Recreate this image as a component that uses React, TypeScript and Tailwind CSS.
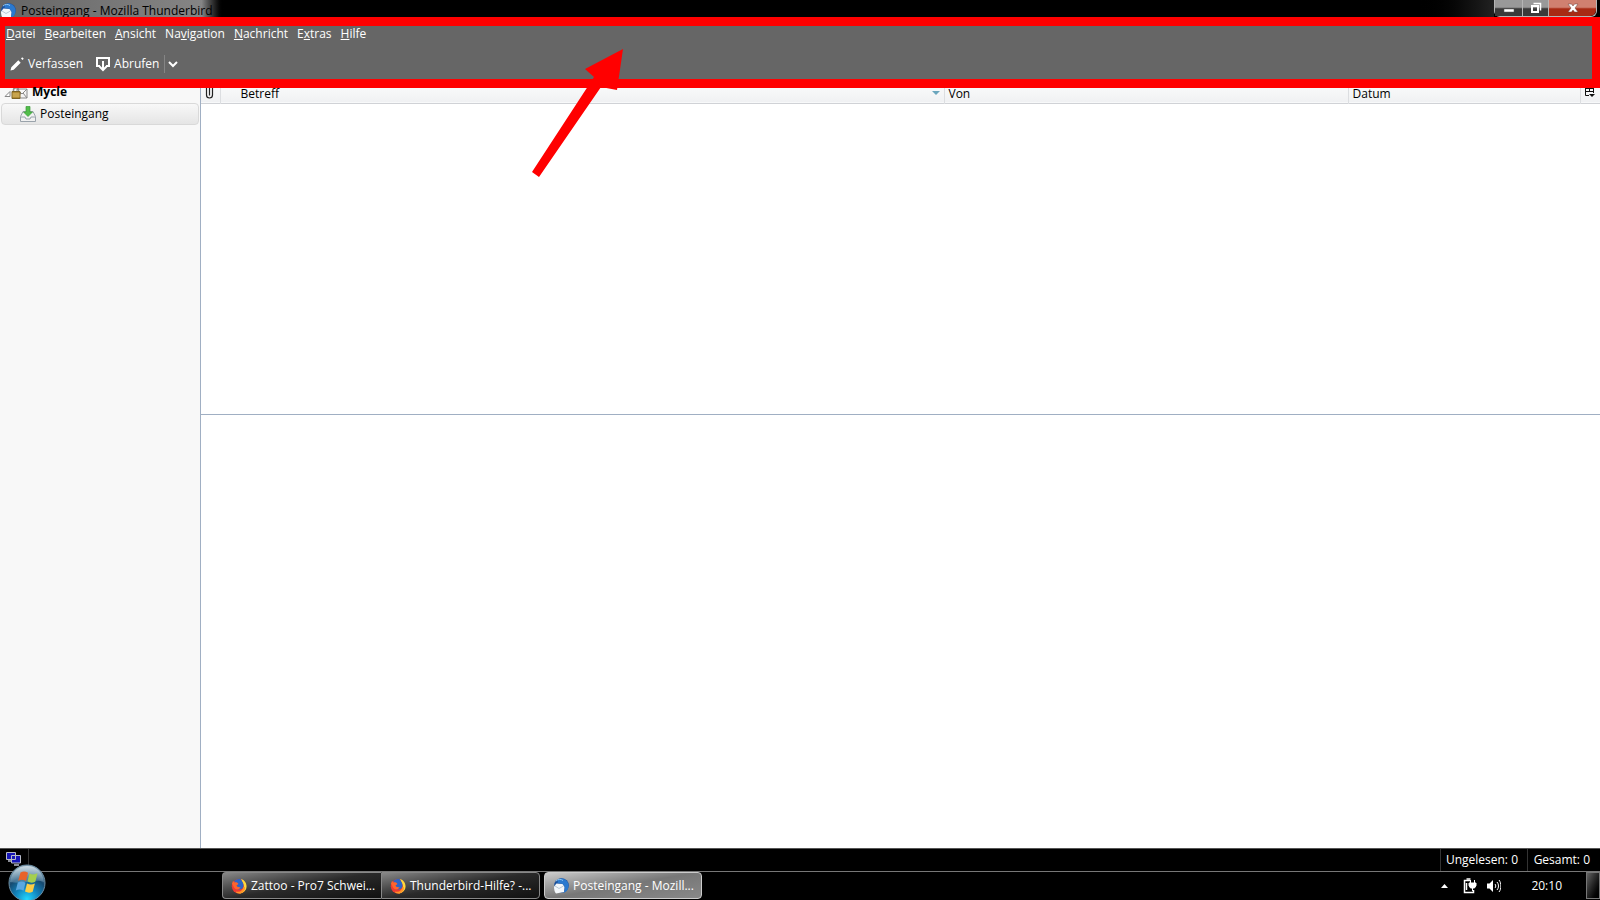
import type { ReactNode } from "react";

const menuItems = [
  { before: "", key: "D", after: "atei" },
  { before: "", key: "B", after: "earbeiten" },
  { before: "", key: "A", after: "nsicht" },
  { before: "Na", key: "v", after: "igation" },
  { before: "", key: "N", after: "achricht" },
  { before: "E", key: "x", after: "tras" },
  { before: "", key: "H", after: "ilfe" },
];

const ThunderbirdIcon = () => (
  <svg className="size-4 shrink-0" viewBox="0 0 16 16" aria-hidden="true">
    <circle cx="8.5" cy="7.5" r="7.3" fill="#1b519c" />
    <path d="M5 1.5C9-1 15 2 15.500 7c.3 4-2 7-5 8 2-3 2-7-1-9-1.500-1-3-1-5-1z" fill="#2a79cf" />
    <path d="M3 3c2-2 5-2 7-.5" stroke="#8fc8f5" strokeWidth="1" fill="none" />
    <path d="M1 8.500 3.500 5.500l6 .5 2 3L11 14l-8 1.500C1.500 14 1 11 1 8.500z" fill="#f3f7fb" />
    <path d="m2 8 4 2.500L10.500 8" stroke="#a9bccd" strokeWidth=".8" fill="none" />
  </svg>
);

const FirefoxIcon = () => (
  <svg className="size-4 shrink-0" viewBox="0 0 16 16" aria-hidden="true">
    <circle cx="8" cy="8.300" r="7.200" fill="#ef3b32" />
    <path d="M10 1c3.500 1 5.800 4 5.500 8-.4 4-4 6.700-8 6.500 4-.5 6-3.500 5.500-7C12.700 5.500 11 4 10 1z" fill="#ffd83b" />
    <path d="M5 13.500c4 1 7-1 7.500-5l1.500 1c0 4-3 6-6 6-2 0-3-1-3-2z" fill="#ff9427" />
    <path d="M3.500 3.500C5 1 8 .5 10 1.500c1 2 2.500 3 2.500 6 0 2.500-2 4-4 4S4.500 10 4.500 8z" fill="#2b65c7" />
    <path d="M1 5.500 2 3l1.500 1.500c2-.5 3 0 4 1.500L5.500 7.500C6 9 7.500 9.500 9.500 9 9 11.500 5 12.500 3 9.500z" fill="#ff642c" />
  </svg>
);

const StartOrb = () => (
  <svg className="size-[38px]" viewBox="0 0 38 38" aria-hidden="true">
    <defs>
      <radialGradient id="orb" cx=".5" cy=".95" r=".95">
        <stop offset="0" stopColor="#22d8ff" />
        <stop offset=".35" stopColor="#1284bd" />
        <stop offset=".65" stopColor="#174a70" />
        <stop offset="1" stopColor="#8da9bb" />
      </radialGradient>
      <linearGradient id="orbShine" x1="0" y1="0" x2="0" y2="1">
        <stop offset="0" stopColor="#d9e4ea" stopOpacity=".85" />
        <stop offset="1" stopColor="#8fb4c9" stopOpacity=".35" />
      </linearGradient>
    </defs>
    <circle cx="19" cy="19" r="18" fill="url(#orb)" stroke="#6d8ea3" />
    <path d="M2 18C3 8 10 2 19 2s16 6 17 16c-10-4-20 3-34 0z" fill="url(#orbShine)" />
    <path d="M12.500 8.500c3-1.500 5-1 7.500.3l-2 8.200c-2.500-1.500-5-1.700-7.800-.3z" fill="#e8632a" />
    <path d="M21.500 9.500c3 1.300 5 1.300 8-.2l-2.200 8.400c-3 1.400-5 1.200-7.800-.1z" fill="#a5cf4e" />
    <path d="M9.800 18.500c2.900-1.400 5.200-1.200 7.700.2l-2 8c-2.500-1.400-5-1.500-7.700-.2z" fill="#5aa7e0" />
    <path d="M19 19.500c2.700 1.300 5 1.400 7.900 0l-2.200 8.200c-2.800 1.400-5 1.200-7.700-.1z" fill="#fccd45" />
  </svg>
);

const WindowButton = ({ label, className, children }: { label: string; className: string; children: ReactNode }) => (
  <button aria-label={label} className={`flex h-full items-center justify-center border-r border-[#b5b5b5] ${className}`}>
    {children}
  </button>
);

const TitleBar = () => (
  <header className="flex h-[17px] shrink-0 overflow-hidden bg-black">
    <div className="flex h-[21px] w-[224px] items-center gap-[5px] bg-linear-to-r from-[#666] via-[#858585] via-90% to-black text-black">
      <ThunderbirdIcon />
      <h1 className="whitespace-nowrap">Posteingang - Mozilla Thunderbird</h1>
    </div>
    <div className="ml-auto w-20 bg-linear-to-r from-black to-[#222]" />
    <div className="mr-[3px] flex h-full rounded-b-md border border-t-0 border-[#b5b5b5]">
      <WindowButton label="Minimieren" className="w-7 bg-linear-to-b from-[#999] from-45% to-[#3a3a3a] to-55%">
        <svg className="h-4 w-3" viewBox="0 0 12 16">
          <path d="M1 9h10v3H1z" fill="#fff" stroke="#555" strokeWidth=".5" />
        </svg>
      </WindowButton>
      <WindowButton label="Wiederherstellen" className="w-[26px] bg-linear-to-b from-[#999] from-45% to-[#3a3a3a] to-55%">
        <svg className="h-4 w-3" viewBox="0 0 12 16" fill="none" stroke="#fff">
          <path d="M3.500 3.500h7v7" strokeWidth="1.500" />
          <path d="M2 6h6v6H2z" strokeWidth="2" />
        </svg>
      </WindowButton>
      <button aria-label="Schließen" className="flex h-full w-[47px] items-center justify-center rounded-br-md bg-linear-to-b from-[#d08070] from-45% to-[#a82a14] to-55%">
        <svg className="h-4 w-3" viewBox="0 0 12 16">
          <path d="M1 4h3.500L6 6l1.500-2H11L8 8l3 4H7.500L6 10l-1.500 2H1l3-4z" fill="#fff" stroke="#6b3e38" strokeWidth=".5" />
        </svg>
      </button>
    </div>
  </header>
);

const Toolbar = () => (
  <div className="h-[71px] shrink-0 border-t-9 border-r-8 border-b-9 border-l-5 border-[#f00] bg-[#666] text-white [text-shadow:1px_1px_1px_#222]">
    <nav className="flex h-4 items-center gap-[9px] pl-px">
      {menuItems.map((item) => (
        <button key={item.key + item.after}>
          {item.before}
          <span className="underline underline-offset-1">{item.key}</span>
          {item.after}
        </button>
      ))}
    </nav>
    <div className="flex h-11 items-center pl-[5px]">
      <button className="flex items-center gap-1">
        <svg className="size-[14px]" viewBox="0 0 14 14" fill="#fff">
          <path d="M.5 13.500 1.300 10.300 8.300 3.300l2.400 2.400-7 7zM11 1.500l1.200-1.300 1.600 1.600L12.500 3z" />
        </svg>
        Verfassen
      </button>
      <button className="ml-[13px] flex items-center gap-1">
        <svg className="h-4 w-[14px]" viewBox="0 0 14 16" fill="none" stroke="#fff" strokeWidth="2">
          <path d="M4 10H1V2h12v8h-3" />
          <path d="M7 5v9M3.500 10.500 7 14l3.500-3.500" />
        </svg>
        Abrufen
      </button>
      <button aria-label="Abrufen-Optionen" className="ml-[5px] flex h-[18px] items-center border-l border-[#858585] pl-[3px]">
        <svg className="size-[10px]" viewBox="0 0 10 10" fill="none" stroke="#fff" strokeWidth="2">
          <path d="m1 3 4 4 4-4" />
        </svg>
      </button>
    </div>
  </div>
);

const FolderPane = () => (
  <aside className="w-[201px] shrink-0 border-r border-[#a0afc3] bg-[#f8f8f8]">
    <div className="flex h-[15px] items-start pl-1">
      <svg className="h-3 w-6" viewBox="0 4 24 12" aria-hidden="true">
        <path d="M1 12.500h5v-5z" fill="#fff" stroke="#888" />
        <path d="M13 5h10v9H13zM13 5l5 5 5-5M13 14l4-5m6 5-4-5" fill="#f4f4f4" stroke="#888" />
        <path d="M9.500 8V6c0-3 5-3 5 0v2" fill="none" stroke="#8f8f8f" strokeWidth="1.500" />
        <path d="M8 7.500h8v7H8z" fill="#b18b35" stroke="#7e6426" />
        <path d="M8.500 10h7M8.500 12h7" stroke="#dfbd68" />
      </svg>
      <span className="ml-1 leading-2 font-bold">Mycle</span>
    </div>
    <a href="#posteingang" className="mx-px flex h-[22px] items-center gap-1 rounded-sm border border-[#d9d9d9] bg-linear-to-b from-[#f8f8f8] to-[#e5e5e5] pl-[18px]">
      <svg className="size-4" viewBox="0 0 16 16" aria-hidden="true">
        <path d="M3 5.500h10l2.500 5v5H.5v-5z" fill="#f1f1f1" stroke="#9aa3ab" />
        <path d="M1 11h4l1 2h4l1-2h4" fill="none" stroke="#9aa3ab" />
        <path d="M6 .5h4V6h2.500L8 10.500 3.500 6H6z" fill="#52bd4a" stroke="#3a9c38" strokeWidth=".7" />
      </svg>
      Posteingang
    </a>
  </aside>
);

const MessageList = () => (
  <section className="h-[327px] shrink-0 border-b border-[#a0afc3]">
    <table className="w-full table-fixed border-collapse text-left">
      <thead>
        <tr className="h-[15px] border-b border-[#d0d2d6] bg-linear-to-b from-[#f8f9fa] to-[#f0f1f3] align-top leading-3">
          <th aria-label="Anhang" className="w-[19px] border-r border-[#dcdee1] p-0">
            <svg className="ml-1 h-3 w-[10px]" viewBox="0 0 10 12" fill="none" stroke="#222">
              <path d="M1.500 0v7c0 4 6 4 6 0V0M4.500 0v7.500" strokeWidth="1.200" />
            </svg>
          </th>
          <th className="border-r border-[#dcdee1] p-0 font-normal">
            <div className="flex justify-between pr-1 pl-5">
              Betreff
              <svg className="mt-[3px] h-1 w-2" viewBox="0 0 8 4">
                <path d="M0 0h8L4 4z" fill="#6ba6bd" />
              </svg>
            </div>
          </th>
          <th className="w-[404px] border-r border-[#dcdee1] p-0 pl-1 font-normal">Von</th>
          <th className="w-[232px] border-r border-[#dcdee1] p-0 pl-1 font-normal">Datum</th>
          <th aria-label="Spalten" className="w-5 p-0">
            <svg className="ml-[3px] h-3 w-3" viewBox="0 0 12 12" fill="none" stroke="#111">
              <path d="M5 7.500H1.500V0M9.500 0v5M1.500 3.500h8M5.500 0v3.500M1 .5h9" />
              <path d="M5 6h6L8 9z" fill="#111" stroke="none" />
            </svg>
          </th>
        </tr>
      </thead>
    </table>
  </section>
);

const StatusBar = () => (
  <footer className="flex h-[23px] shrink-0 items-stretch border-t border-[#555] bg-black text-white">
    <div className="flex w-[29px] items-start border-r border-[#333] pt-[3px] pl-[6px]">
      <svg className="h-[14px] w-4" viewBox="0 0 16 14" aria-hidden="true">
        <path d="M2 9h3M8 13h5" stroke="#b8bcc8" strokeWidth="1.500" />
        <path d="M.5.500h9v7h-9zM5.500 3.500h9v7.500h-9z" fill="#1616b8" stroke="#b8bcc8" />
      </svg>
    </div>
    <span className="ml-auto flex w-[87px] items-center justify-end border-l border-[#333] pr-[9px]">Ungelesen: 0</span>
    <span className="flex w-[73px] items-center justify-end border-l border-[#333] pr-[10px]">Gesamt: 0</span>
  </footer>
);

const Taskbar = () => (
  <div className="flex h-[29px] shrink-0 border-t border-[#777] bg-black pb-px text-white">
    <button aria-label="Start" className="relative ml-2 w-[214px]">
      <span className="absolute -top-2 left-0">
        <StartOrb />
      </span>
    </button>
    <button className="flex w-[159px] items-center gap-1 rounded-l-sm border border-r-0 border-[#888] bg-linear-170 from-[#888] via-[#2a2a2a] via-50% to-[#111] pl-2">
      <FirefoxIcon />
      <span className="whitespace-nowrap">Zattoo - Pro7 Schwei...</span>
    </button>
    <button className="flex w-[159px] items-center gap-1 rounded-r-sm border border-[#888] bg-linear-170 from-[#888] via-[#2a2a2a] via-50% to-[#111] pl-2">
      <FirefoxIcon />
      <span className="whitespace-nowrap">Thunderbird-Hilfe? -...</span>
    </button>
    <button className="ml-1 flex w-[158px] items-center gap-1 rounded-sm border border-[#ccc] bg-linear-170 from-[#ccc] via-[#777] via-50% to-[#888] pl-2">
      <ThunderbirdIcon />
      <span className="whitespace-nowrap">Posteingang - Mozill...</span>
    </button>
    <div className="ml-auto flex items-center">
      <svg className="h-1 w-[7px]" viewBox="0 0 7 4" aria-hidden="true">
        <path d="M0 4h7L3.500 0z" fill="#fff" />
      </svg>
      <svg className="ml-[15px] h-4 w-[14px]" viewBox="0 0 14 16" fill="none" stroke="#fff" aria-hidden="true">
        <path d="M7 2.500H1.500v12h9V12" strokeWidth="1.500" />
        <path d="M3.500 5v7M3.500 1h4" strokeWidth="1.500" />
        <path d="M6 5h7v2.500L11.500 10h-4L6 7.500z" fill="#fff" />
        <path d="M7.500 2v3m4-3v3M9.500 10v3" />
      </svg>
      <svg className="ml-[10px] h-[14px] w-[14px]" viewBox="0 0 14 14" fill="none" stroke="#fff" aria-hidden="true">
        <path d="M0 4.500h2.500L6 1v12L2.500 9.500H0z" fill="#fff" stroke="none" />
        <path d="M8 5c1 1 1 3 0 4m2-6c2 2 2 6 0 8m2-10c2.500 3 2.500 9 0 12" />
      </svg>
      <time className="ml-[30px]">20:10</time>
      <button aria-label="Desktop anzeigen" className="ml-6 h-full w-[14px] border border-[#777] bg-linear-to-br from-[#666] to-black" />
    </div>
  </div>
);

const Arrow = () => (
  <svg className="pointer-events-none absolute top-12 left-[530px] h-[130px] w-[96px]" viewBox="0 0 96 130" fill="#f00" aria-hidden="true">
    <path d="M93 1 55 21l9 8L2 124l7 5 62-90 16 3z" />
  </svg>
);

export default function App() {
  return (
    <div className="relative flex h-screen flex-col bg-white font-['Open_Sans',sans-serif] text-[12px] leading-4 text-black">
      <TitleBar />
      <Toolbar />
      <main className="flex min-h-0 flex-1">
        <FolderPane />
        <div className="flex min-w-0 flex-1 flex-col">
          <MessageList />
          <section aria-label="Nachricht" className="flex-1" />
        </div>
      </main>
      <StatusBar />
      <Taskbar />
      <Arrow />
    </div>
  );
}
